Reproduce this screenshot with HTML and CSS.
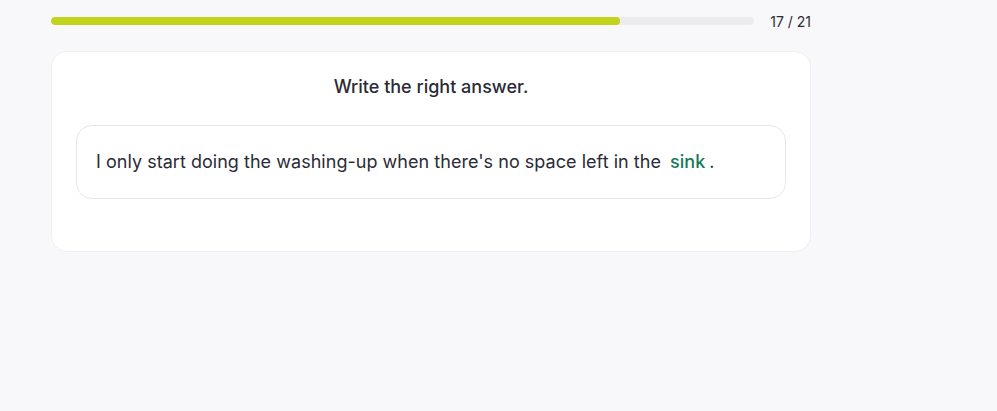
FILE: index.html
```html
<!DOCTYPE html>
<html lang="en">
<head>
<meta charset="utf-8">
<link rel="stylesheet" href="styles.css">
</head>
<body>
<div class="page">
  <div class="top">
    <div class="track"><div class="fill" style="width:80.9%"></div></div>
    <div class="count">17 / 21</div>
  </div>
  <div class="card">
    <div class="title">Write the right answer.</div>
    <div class="box">
      <p class="sentence">I only start doing the washing-up when there's no space left in the <span class="answer">sink</span>.</p>
    </div>
  </div>
</div>
</body>
</html>
```
FILE: styles.css
```css
html, body {
  margin: 0;
  padding: 0;
  background: #f8f8fa;
  font-family: Inter, "Noto Sans", sans-serif;
  color: #2b2b36;
}
.page {
  width: 760px;
  padding: 13px 0 0 51px;
}
.top {
  display: flex;
  align-items: center;
  gap: 16px;
  height: 16px;
}
.track {
  flex: 1;
  height: 8px;
  border-radius: 4px;
  background: #ebebed;
  overflow: hidden;
}
.fill {
  height: 100%;
  border-radius: 4px;
  background: #c1d31a;
}
.count {
  font-size: 14px;
  color: #2b2b36;
  white-space: nowrap;
}
.card {
  margin-top: 22px;
  background: #fff;
  border: 1px solid #efeff1;
  border-radius: 16px;
  padding: 22px 24px 52px;
}
.title {
  text-align: center;
  font-size: 18px;
  font-weight: 500;
  line-height: 26px;
}
.box {
  margin-top: 25px;
  border: 1px solid #e8e8eb;
  border-radius: 16px;
  padding: 23px 19px;
}
.sentence {
  margin: 0;
  font-size: 18px;
  line-height: 26px;
  letter-spacing: 0.03px;
}
.answer {
  color: #17795a;
  font-weight: 500;
  padding: 0 4px;
}
```
